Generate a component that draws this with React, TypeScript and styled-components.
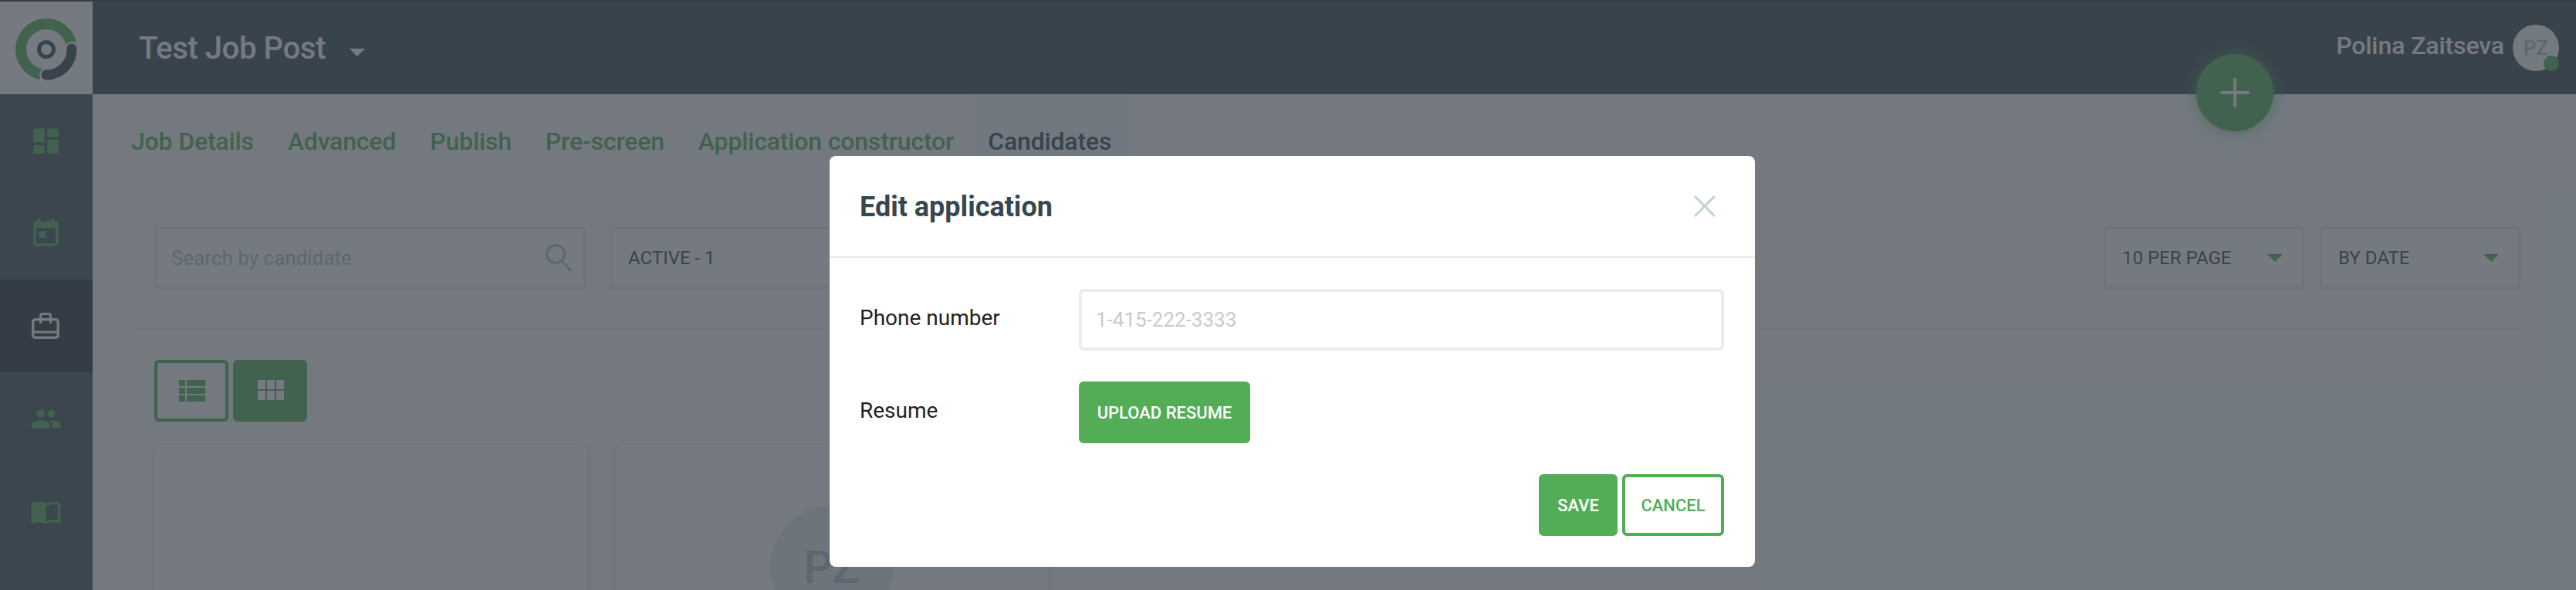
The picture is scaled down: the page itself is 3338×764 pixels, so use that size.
import React from "react";
import styled, { createGlobalStyle } from "styled-components";

const green = "#53ad57";
const dark = "#37474f";
const muted = "#b0bec5";

const GlobalStyle = createGlobalStyle`
  html, body {
    margin: 0;
    padding: 0;
    background: #fff;
  }
  * {
    box-sizing: border-box;
  }
`;

const Page = styled.div`
  width: 3338px;
  height: 764px;
  overflow: hidden;
  position: relative;
  display: flex;
  flex-direction: column;
  background: #fafbfc;
  font-family: Roboto, "Liberation Sans", sans-serif;
`;
const TopLine = styled.div`
  height: 2px;
  flex: none;
  background: #2c2f32;
`;

/* header */
const Header = styled.header`
  height: 120px;
  flex: none;
  display: flex;
  align-items: stretch;
  position: relative;
  background: ${dark};
`;
const LogoBox = styled.div`
  width: 120px;
  flex: none;
  background: #fff;
`;
const JobTitle = styled.div`
  display: flex;
  align-items: center;
  padding-left: 60px;
  gap: 31px;
  font-size: 40px;
  font-weight: 500;
  letter-spacing: -0.4px;
  color: #fff;
`;
const TitleCaret = styled.span`
  width: 0;
  height: 0;
  margin-top: 12px;
  border-left: 10px solid transparent;
  border-right: 10px solid transparent;
  border-top: 10px solid #fff;
`;
const UserBox = styled.div`
  margin-left: auto;
  padding-right: 22px;
  display: flex;
  align-items: center;
  gap: 11px;
`;
const UserName = styled.span`
  font-size: 32px;
  font-weight: 500;
  letter-spacing: -0.1px;
  color: #fff;
  margin-top: -6px;
`;
const UserAvatar = styled.div`
  width: 60px;
  height: 60px;
  border-radius: 50%;
  position: relative;
  display: flex;
  align-items: center;
  justify-content: center;
  background: #fff;
  color: ${muted};
  font-size: 26px;
  font-weight: 500;
`;
const OnlineDot = styled.span`
  position: absolute;
  right: 0;
  bottom: 0;
  width: 20px;
  height: 20px;
  border-radius: 50%;
  background: ${green};
`;
const Fab = styled.div`
  position: absolute;
  left: 2846px;
  top: 68px;
  width: 100px;
  height: 100px;
  border-radius: 50%;
  display: flex;
  align-items: center;
  justify-content: center;
  background: ${green};
  box-shadow: 0 0 20px rgba(83, 173, 87, 0.75);
  z-index: 2;
`;

/* sidebar */
const Body = styled.div`
  flex: 1;
  display: flex;
  min-height: 0;
`;
const Sidebar = styled.nav`
  width: 120px;
  flex: none;
  display: flex;
  flex-direction: column;
  background: #3c5059;
`;
const NavItem = styled.div<{ $active?: boolean }>`
  height: 120px;
  flex: none;
  display: flex;
  align-items: center;
  justify-content: center;
  padding-right: 2px;
  color: ${(p) => (p.$active ? "#fff" : green)};
  background: ${(p) => (p.$active ? "#263238" : "transparent")};
`;

/* main content */
const Main = styled.main`
  flex: 1;
  min-width: 0;
  display: flex;
  flex-direction: column;
`;
const Tabs = styled.div`
  height: 122px;
  flex: none;
  display: flex;
  align-items: center;
  padding-left: 28px;
`;
const Tab = styled.div<{ $active?: boolean }>`
  height: 100%;
  display: flex;
  align-items: center;
  padding: 0 22px;
  font-size: 32px;
  font-weight: 500;
  letter-spacing: -0.17px;
  color: ${(p) => (p.$active ? dark : green)};
  background: ${(p) => (p.$active ? "#f6f7f8" : "transparent")};
`;
const Section = styled.section`
  margin-left: 50px;
  padding: 50px 72px 0 30px;
`;
const Filters = styled.div`
  display: flex;
  align-items: center;
  padding-bottom: 51px;
  border-bottom: 2px solid #f0f1f2;
  margin-left: -30px;
  padding-left: 30px;
`;
const Field = styled.div<{ $width: number; $wide?: boolean }>`
  width: ${(p) => p.$width}px;
  height: 80px;
  flex: none;
  display: flex;
  align-items: center;
  justify-content: space-between;
  padding: 0 24px 0 20px;
  margin-left: ${(p) => (p.$wide ? "30px" : "0")};
  border: 4px solid #e9edf0;
  border-radius: 4px;
  background: #fff;
`;
const SearchText = styled.span`
  font-size: 26px;
  margin-left: -2px;
  color: ${muted};
`;
const SearchSvg = styled.svg`
  margin-right: -10px;
`;
const FieldText = styled.span`
  font-size: 24px;
  color: ${dark};
`;
const FieldArrow = styled.span`
  width: 0;
  height: 0;
  border-left: 10px solid transparent;
  border-right: 10px solid transparent;
  border-top: 10px solid ${green};
`;
const FiltersRight = styled.div`
  margin-left: auto;
  display: flex;
  gap: 20px;
`;
const ViewSwitch = styled.div`
  display: flex;
  gap: 6px;
  margin-top: 39px;
`;
const ViewButton = styled.div<{ $active?: boolean }>`
  width: 96px;
  height: 80px;
  display: flex;
  align-items: center;
  justify-content: center;
  border: 4px solid ${green};
  border-radius: 6px;
  color: ${(p) => (p.$active ? "#fff" : green)};
  background: ${(p) => (p.$active ? green : "transparent")};
`;
const Cards = styled.div`
  display: flex;
  gap: 38px;
  margin-top: 30px;
`;
const Card = styled.div`
  width: 560px;
  height: 400px;
  flex: none;
  display: flex;
  justify-content: center;
  padding-top: 78px;
  border-radius: 8px;
  background: #fff;
  box-shadow: 0 2px 12px rgba(0, 0, 0, 0.12);
`;
const CardAvatar = styled.div`
  width: 160px;
  height: 160px;
  border-radius: 50%;
  display: flex;
  align-items: center;
  justify-content: center;
  background: #e6eaec;
  color: ${muted};
  font-size: 60px;
  font-weight: 500;
`;

/* modal */
const Overlay = styled.div`
  position: absolute;
  inset: 0;
  z-index: 5;
  display: flex;
  justify-content: center;
  align-items: flex-start;
  padding: 202px 0 0 11px;
  background: rgba(58, 66, 76, 0.7);
`;
const Modal = styled.div`
  width: 1199px;
  height: 532px;
  border-radius: 8px;
  background: #fff;
`;
const ModalHeader = styled.div`
  height: 132px;
  display: flex;
  align-items: center;
  justify-content: space-between;
  padding: 0 51px 0 39px;
  border-bottom: 2px solid #e8e8e8;
`;
const ModalTitle = styled.div`
  font-size: 36px;
  font-weight: 700;
  color: ${dark};
  margin-top: 2px;
`;
const ModalBody = styled.div`
  padding: 40px 40px 40px 39px;
  display: flex;
  flex-direction: column;
  gap: 40px;
`;
const FormRow = styled.div`
  display: grid;
  grid-template-columns: 284px 1fr;
  align-items: center;
`;
const FormLabel = styled.label`
  font-size: 28px;
  color: #222;
  padding-bottom: 6px;
`;
const PhoneInput = styled.input`
  width: 100%;
  height: 80px;
  padding: 0 18px;
  border: 4px solid #e9edf0;
  border-radius: 6px;
  outline: none;
  font-family: inherit;
  font-size: 26px;
  &::placeholder {
    color: #c4ccd2;
    opacity: 1;
  }
`;
const Actions = styled.div`
  display: flex;
  justify-content: flex-end;
  gap: 6px;
`;
const Button = styled.button<{ $outline?: boolean; $width: number }>`
  width: ${(p) => p.$width}px;
  height: 80px;
  padding: 0;
  border: 4px solid ${green};
  border-radius: 6px;
  font-family: inherit;
  font-size: 22px;
  font-weight: 500;
  color: ${(p) => (p.$outline ? green : "#fff")};
  background: ${(p) => (p.$outline ? "#fff" : green)};
`;

function Logo() {
  return (
    <svg width="120" height="120" viewBox="0 0 120 120">
      <path d="M91.9 53.5A33 33 0 1 0 53.2 94.3" fill="none" stroke={green} strokeWidth="14" />
      <path d="M93 61A33 33 0 0 1 60 95" fill="none" stroke="#fff" strokeWidth="18" strokeLinecap="round" />
      <path d="M93 61A33 33 0 0 1 60 95" fill="none" stroke={dark} strokeWidth="13" strokeLinecap="round" />
      <circle cx="60" cy="62" r="9.5" fill="none" stroke={dark} strokeWidth="5" />
    </svg>
  );
}

function MaterialIcon(props: { size: number; d: string }) {
  return (
    <svg width={props.size} height={props.size} viewBox="0 0 24 24" fill="currentColor">
      <path d={props.d} />
    </svg>
  );
}

function Briefcase() {
  return (
    <svg width="36" height="34" viewBox="0 0 36 34" fill="none" stroke="currentColor">
      <rect x="1.75" y="8.75" width="32.5" height="23.5" rx="3" strokeWidth="3.5" />
      <path d="M11.5 14V4A2.5 2.5 0 0 1 14 1.5h8A2.5 2.5 0 0 1 24.5 4v10" strokeWidth="3" />
      <path d="M3 25h30" strokeWidth="3" />
    </svg>
  );
}

function SearchGlyph() {
  return (
    <SearchSvg width="36" height="36" viewBox="0 0 36 36" fill="none" stroke={muted} strokeWidth="3">
      <circle cx="14" cy="13" r="11.5" />
      <path d="M22 22l12 13" />
    </SearchSvg>
  );
}

const icons = {
  dashboard: "M3 13h8V3H3v10zm0 8h8v-6H3v6zm10 0h8V11h-8v10zm0-18v6h8V3h-8z",
  event:
    "M12 15H7v-5h5v5zM16 1v2H8V1H6v2H5c-1.11 0-1.99.9-1.99 2L3 19c0 1.1.89 2 2 2h14c1.1 0 2-.9 2-2V5c0-1.1-.9-2-2-2h-1V1h-2zm3 18H5V8h14v11z",
  people:
    "M16 11c1.66 0 2.99-1.34 2.99-3S17.66 5 16 5c-1.66 0-3 1.34-3 3s1.34 3 3 3zm-8 0c1.66 0 2.99-1.34 2.99-3S9.66 5 8 5C6.34 5 5 6.34 5 8s1.34 3 3 3zm0 2c-2.33 0-7 1.17-7 3.5V19h14v-2.5c0-2.33-4.67-3.5-7-3.5zm8 0c-.29 0-.62.02-.97.05 1.16.84 1.97 1.97 1.97 3.45V19h6v-2.5c0-2.33-4.67-3.5-7-3.5z",
  book:
    "M21 5c-1.11-.35-2.33-.5-3.5-.5-1.95 0-4.05.4-5.5 1.5-1.45-1.1-3.55-1.5-5.5-1.5S2.45 4.9 1 6v14.65c0 .25.25.5.5.5.1 0 .15-.05.25-.05C3.1 20.45 5.05 20 6.5 20c1.95 0 4.05.4 5.5 1.5 1.35-.85 3.8-1.5 5.5-1.5 1.65 0 3.35.3 4.75 1.05.1.05.15.05.25.05.25 0 .5-.25.5-.5V6c-.6-.45-1.25-.75-2-1zm0 13.5c-1.1-.35-2.3-.5-3.5-.5-1.7 0-4.15.65-5.5 1.5V8c1.35-.85 3.8-1.5 5.5-1.5 1.2 0 2.4.15 3.5.5v11.5z",
  list: "M4 14h4v-4H4v4zm0 5h4v-4H4v4zM4 9h4V5H4v4zm5 5h12v-4H9v4zm0 5h12v-4H9v4zM9 5v4h12V5H9z",
  grid: "M4 11h5V5H4v6zm0 7h5v-6H4v6zm6 0h5v-6h-5v6zm6 0h5v-6h-5v6zm-6-7h5V5h-5v6zm6-6v6h5V5h-5z",
};

const tabs = ["Job Details", "Advanced", "Publish", "Pre-screen", "Application constructor"];

export default function App() {
  return (
    <Page>
      <GlobalStyle />
      <TopLine />
      <Header>
        <LogoBox>
          <Logo />
        </LogoBox>
        <JobTitle>
          Test Job Post
          <TitleCaret />
        </JobTitle>
        <UserBox>
          <UserName>Polina Zaitseva</UserName>
          <UserAvatar>
            PZ
            <OnlineDot />
          </UserAvatar>
        </UserBox>
        <Fab>
          <svg width="38" height="38" viewBox="0 0 38 38" stroke="#fff" strokeWidth="4" strokeLinecap="round">
            <path d="M19 2v34M2 19h34" />
          </svg>
        </Fab>
      </Header>
      <Body>
        <Sidebar>
          <NavItem>
            <MaterialIcon size={43} d={icons.dashboard} />
          </NavItem>
          <NavItem>
            <MaterialIcon size={43} d={icons.event} />
          </NavItem>
          <NavItem $active>
            <Briefcase />
          </NavItem>
          <NavItem>
            <MaterialIcon size={41} d={icons.people} />
          </NavItem>
          <NavItem>
            <MaterialIcon size={41} d={icons.book} />
          </NavItem>
        </Sidebar>
        <Main>
          <Tabs>
            {tabs.map((t) => (
              <Tab key={t}>{t}</Tab>
            ))}
            <Tab $active>Candidates</Tab>
          </Tabs>
          <Section>
            <Filters>
              <Field $width={560}>
                <SearchText>Search by candidate</SearchText>
                <SearchGlyph />
              </Field>
              <Field $width={560} $wide>
                <FieldText>ACTIVE - 1</FieldText>
                <FieldArrow />
              </Field>
              <FiltersRight>
                <Field $width={260}>
                  <FieldText>10 PER PAGE</FieldText>
                  <FieldArrow />
                </Field>
                <Field $width={260}>
                  <FieldText>BY DATE</FieldText>
                  <FieldArrow />
                </Field>
              </FiltersRight>
            </Filters>
            <ViewSwitch>
              <ViewButton>
                <MaterialIcon size={48} d={icons.list} />
              </ViewButton>
              <ViewButton $active>
                <MaterialIcon size={48} d={icons.grid} />
              </ViewButton>
            </ViewSwitch>
            <Cards>
              <Card />
              <Card>
                <CardAvatar>PZ</CardAvatar>
              </Card>
            </Cards>
          </Section>
        </Main>
      </Body>
      <Overlay>
        <Modal>
          <ModalHeader>
            <ModalTitle>Edit application</ModalTitle>
            <svg width="28" height="28" viewBox="0 0 28 28" stroke="#c4d0d3" strokeWidth="3">
              <path d="M1 1l26 26M27 1L1 27" />
            </svg>
          </ModalHeader>
          <ModalBody>
            <FormRow>
              <FormLabel>Phone number</FormLabel>
              <PhoneInput placeholder="1-415-222-3333" />
            </FormRow>
            <FormRow>
              <FormLabel>Resume</FormLabel>
              <div>
                <Button $width={222}>UPLOAD RESUME</Button>
              </div>
            </FormRow>
            <Actions>
              <Button $width={102}>SAVE</Button>
              <Button $width={132} $outline>
                CANCEL
              </Button>
            </Actions>
          </ModalBody>
        </Modal>
      </Overlay>
    </Page>
  );
}
